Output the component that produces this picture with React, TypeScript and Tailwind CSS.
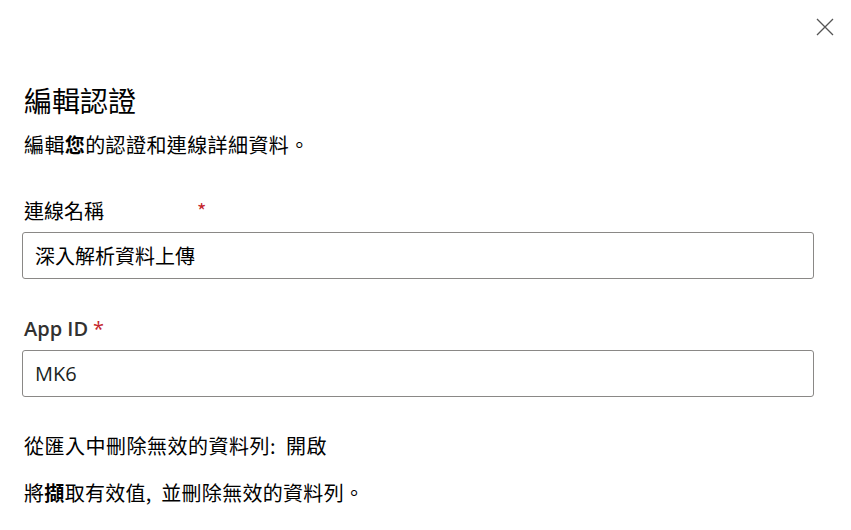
const cjk = "font-['Noto_Sans_CJK_TC','Noto_Sans',sans-serif]"
const latin = "font-['Open_Sans','Noto_Sans_CJK_TC',sans-serif]"

export default function App() {
  return (
    <div className={`w-[851px] h-[530px] bg-white text-black overflow-hidden ${cjk}`}>
      {/* close */}
      <div className="flex h-[54px] items-center justify-end pr-[16px]">
        <button className="flex h-[20px] w-[20px] items-center justify-center text-[#555]">
          <svg width="18" height="18" viewBox="0 0 18 18" fill="none" stroke="currentColor" strokeWidth="1.3">
            <path d="M1 1 L17 17 M17 1 L1 17" />
          </svg>
        </button>
      </div>

      <div className="flex flex-col pl-[24px]">
        <h1 className="mt-[28px] text-[28px] leading-[36px] font-normal">編輯認證</h1>
        <p className="mt-[13px] text-[20px] leading-[28px] tracking-[0.4px]">
          編輯<span className="font-bold">您</span>的認證和連線詳細資料。
        </p>

        <label className="mt-[38px] flex text-[20px] leading-[28px]">
          <span className="w-[173px]">連線名稱</span>
          <span className="text-[20px] text-[#c4262c]">*</span>
        </label>
        <div className="-ml-[2px] mt-[7px] flex h-[47px] w-[792px] items-center rounded-[3px] border border-[#8a8886] pl-[12px] text-[20px]">
          深入解析資料上傳
        </div>

        <label className={`mt-[36px] flex items-center gap-[5px] text-[20px] leading-[28px] font-semibold text-[#323130] ${latin}`}>
          App ID <span className="text-[20px] font-normal text-[#c4262c]">*</span>
        </label>
        <div className={`-ml-[2px] mt-[7px] flex h-[47px] w-[792px] items-center rounded-[3px] border border-[#8a8886] pl-[12px] text-[20px] text-[#201f1e] ${latin}`}>
          MK6
        </div>

        <p className="mt-[35px] text-[20px] leading-[28px] tracking-[0.5px]">
          從匯入中刪除無效的資料列:&nbsp;&nbsp;開啟
        </p>
        <p className="mt-[19px] text-[20px] leading-[28px] tracking-[0.3px]">
          將<span className="font-bold">擷</span>取有效值,&nbsp;&nbsp;並刪除無效的資料列。
        </p>
      </div>
    </div>
  )
}
